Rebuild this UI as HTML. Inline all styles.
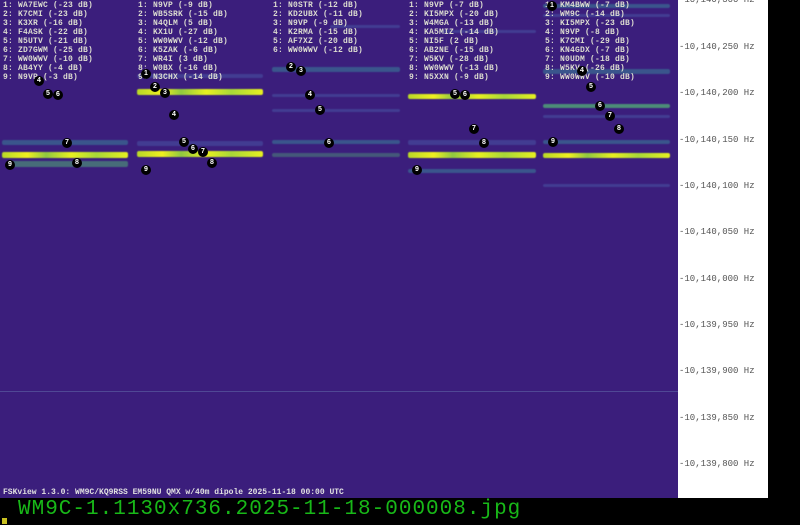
<!DOCTYPE html>
<html><head><meta charset="utf-8"><style>
*{margin:0;padding:0;box-sizing:border-box}
body{width:800px;height:525px;background:#000;position:relative;overflow:hidden;font-family:"Liberation Mono",monospace}
#wf{position:absolute;left:0;top:0;width:678px;height:498px;background:#3b1e7c;overflow:hidden}
#axis{position:absolute;left:678px;top:0;width:90px;height:498px;background:#fff}
.lab{position:absolute;left:1px;font-size:9px;color:#555;white-space:pre;line-height:9px}
.txt{position:absolute;font-size:8px;line-height:9px;color:#dcdcd0;font-weight:bold;white-space:pre;letter-spacing:0.2px}
.b{position:absolute;border-radius:2px;filter:blur(0.6px)}
.y{background:linear-gradient(90deg,#b8d828,#f0f020 20%,#90c840 35%,#e8f020 55%,#a8d838 75%,#e8f020);}
.t{background:#3a7a98;opacity:.6}
.f{background:#4a5aa8;opacity:.5}
.g{background:#50a078;opacity:.7}
.m{position:absolute;width:10px;height:10px;border-radius:50%;background:#000;color:#fff;font-size:7px;line-height:10px;text-align:center;font-family:"Liberation Sans",sans-serif;font-weight:bold}
#bot{position:absolute;left:18px;top:498px;font-size:21px;color:#18b818;letter-spacing:1px;line-height:24px}
#foot{position:absolute;left:3px;top:488px;font-size:8px;color:#e0e0e0;font-weight:bold;white-space:pre}
</style></head><body>
<div id="wf">
<div style="position:absolute;left:0;top:391px;width:678px;height:1px;background:#5a5aa0;opacity:.7"></div>
<!-- col1 -->
<div class="b t" style="left:2px;top:140px;width:126px;height:5px"></div>
<div class="b y" style="left:2px;top:152px;width:126px;height:6px"></div>
<div class="b g" style="left:10px;top:161px;width:118px;height:6px;opacity:.6"></div>
<!-- col2 -->
<div class="b f" style="left:137px;top:74px;width:126px;height:4px"></div>
<div class="b y" style="left:137px;top:89px;width:126px;height:6px"></div>
<div class="b f" style="left:137px;top:141px;width:126px;height:5px"></div>
<div class="b y" style="left:137px;top:151px;width:126px;height:6px"></div>
<!-- col3 -->
<div class="b t" style="left:272px;top:67px;width:128px;height:5px"></div>
<div class="b f" style="left:272px;top:94px;width:128px;height:3px"></div>
<div class="b f" style="left:272px;top:109px;width:128px;height:3px"></div>
<div class="b t" style="left:272px;top:140px;width:128px;height:4px"></div>
<div class="b g" style="left:272px;top:153px;width:128px;height:4px;opacity:.45"></div>
<div class="b f" style="left:330px;top:25px;width:70px;height:3px"></div>
<!-- col4 -->
<div class="b y" style="left:408px;top:94px;width:128px;height:5px"></div>
<div class="b f" style="left:408px;top:140px;width:128px;height:5px"></div>
<div class="b y" style="left:408px;top:152px;width:128px;height:6px"></div>
<div class="b t" style="left:408px;top:169px;width:128px;height:4px"></div>
<div class="b f" style="left:440px;top:30px;width:96px;height:3px"></div>
<!-- col5 -->
<div class="b t" style="left:543px;top:4px;width:127px;height:4px"></div>
<div class="b f" style="left:543px;top:14px;width:127px;height:3px"></div>
<div class="b t" style="left:543px;top:69px;width:127px;height:5px"></div>
<div class="b g" style="left:543px;top:104px;width:127px;height:4px;opacity:.85"></div>
<div class="b f" style="left:543px;top:115px;width:127px;height:3px"></div>
<div class="b t" style="left:543px;top:140px;width:127px;height:4px"></div>
<div class="b y" style="left:543px;top:153px;width:127px;height:5px"></div>
<div class="b f" style="left:543px;top:184px;width:127px;height:3px"></div>

<div class="txt" style="left:3px;top:1px">1: WA7EWC (-23 dB)
2: K7CMI (-23 dB)
3: K3XR (-16 dB)
4: F4ASK (-22 dB)
5: N5UTV (-21 dB)
6: ZD7GWM (-25 dB)
7: WW0WWV (-10 dB)
8: AB4YY (-4 dB)
9: N9VP (-3 dB)</div>
<div class="txt" style="left:138px;top:1px">1: N9VP (-9 dB)
2: WB5SRK (-15 dB)
3: N4QLM (5 dB)
4: KX1U (-27 dB)
5: WW0WWV (-12 dB)
6: K5ZAK (-6 dB)
7: WR4I (3 dB)
8: W0BX (-16 dB)
9: N3CHX (-14 dB)</div>
<div class="txt" style="left:273px;top:1px">1: N0STR (-12 dB)
2: KD2UBX (-11 dB)
3: N9VP (-9 dB)
4: K2RMA (-15 dB)
5: AF7XZ (-20 dB)
6: WW0WWV (-12 dB)</div>
<div class="txt" style="left:409px;top:1px">1: N9VP (-7 dB)
2: KI5MPX (-20 dB)
3: W4MGA (-13 dB)
4: KA5MIZ (-14 dB)
5: NI5F (2 dB)
6: AB2NE (-15 dB)
7: W5KV (-28 dB)
8: WW0WWV (-13 dB)
9: N5XXN (-9 dB)</div>
<div class="txt" style="left:545px;top:1px">1: KM4BWW (-7 dB)
2: WM9C (-14 dB)
3: KI5MPX (-23 dB)
4: N9VP (-8 dB)
5: K7CMI (-29 dB)
6: KN4GDX (-7 dB)
7: N0UDM (-18 dB)
8: W5KV (-26 dB)
9: WW0WWV (-10 dB)</div>

<div class="m" style="left:34px;top:76px">4</div><div class="m" style="left:43px;top:89px">5</div><div class="m" style="left:53px;top:90px">6</div><div class="m" style="left:62px;top:138px">7</div><div class="m" style="left:72px;top:158px">8</div><div class="m" style="left:5px;top:160px">9</div>
<div class="m" style="left:141px;top:69px">1</div><div class="m" style="left:150px;top:82px">2</div><div class="m" style="left:160px;top:88px">3</div><div class="m" style="left:169px;top:110px">4</div><div class="m" style="left:179px;top:137px">5</div><div class="m" style="left:188px;top:144px">6</div><div class="m" style="left:198px;top:147px">7</div><div class="m" style="left:207px;top:158px">8</div><div class="m" style="left:141px;top:165px">9</div>
<div class="m" style="left:286px;top:62px">2</div><div class="m" style="left:296px;top:66px">3</div><div class="m" style="left:305px;top:90px">4</div><div class="m" style="left:315px;top:105px">5</div><div class="m" style="left:324px;top:138px">6</div>
<div class="m" style="left:450px;top:89px">5</div><div class="m" style="left:460px;top:90px">6</div><div class="m" style="left:469px;top:124px">7</div><div class="m" style="left:479px;top:138px">8</div><div class="m" style="left:412px;top:165px">9</div>
<div class="m" style="left:547px;top:1px">1</div><div class="m" style="left:577px;top:66px">4</div><div class="m" style="left:586px;top:82px">5</div><div class="m" style="left:595px;top:101px">6</div><div class="m" style="left:605px;top:111px">7</div><div class="m" style="left:614px;top:124px">8</div><div class="m" style="left:548px;top:137px">9</div>
</div>
<div id="foot">FSKview 1.3.0: WM9C/KQ9RSS EM59NU QMX w/40m dipole 2025-11-18 00:00 UTC</div>
<div id="axis">
<div class="lab" style="top:-4px">-10,140,300 Hz</div>
<div class="lab" style="top:43px">-10,140,250 Hz</div>
<div class="lab" style="top:89px">-10,140,200 Hz</div>
<div class="lab" style="top:136px">-10,140,150 Hz</div>
<div class="lab" style="top:182px">-10,140,100 Hz</div>
<div class="lab" style="top:228px">-10,140,050 Hz</div>
<div class="lab" style="top:275px">-10,140,000 Hz</div>
<div class="lab" style="top:321px">-10,139,950 Hz</div>
<div class="lab" style="top:367px">-10,139,900 Hz</div>
<div class="lab" style="top:414px">-10,139,850 Hz</div>
<div class="lab" style="top:460px">-10,139,800 Hz</div>
</div>
<div id="bot">WM9C-1.1130x736.2025-11-18-000008.jpg</div>
<div style="position:absolute;left:2px;top:518px;width:5px;height:6px;background:#c8c020"></div>
</body></html>
